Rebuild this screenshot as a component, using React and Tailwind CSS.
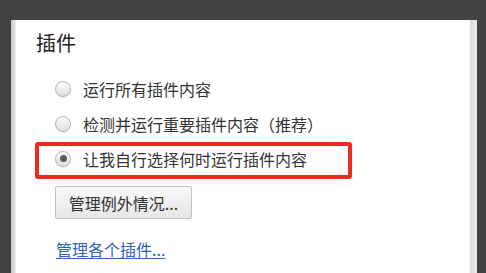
import React from "react";

const Radio = ({ checked }) => (
  <span className="flex h-4 w-4 items-center justify-center rounded-full border border-[#b4b4b4] bg-gradient-to-b from-[#fdfdfd] to-[#dedede] shadow-[0_1px_1px_rgba(0,0,0,0.08)]">
    {checked && <span className="h-[7px] w-[7px] rounded-full bg-[#5a5a5a]" />}
  </span>
);

const Option = ({ label, checked }) => (
  <div className="flex h-[35px] items-center">
    <Radio checked={checked} />
    <span className="ml-[12px] text-[16px] leading-[20px] text-[#333]">{label}</span>
  </div>
);

const App = () => {
  return (
    <div
      className="flex h-[273px] w-[486px] flex-col overflow-hidden bg-[#434343]"
      style={{ fontFamily: '"Noto Sans CJK SC", "Noto Sans", sans-serif' }}
    >
      <div className="h-[20px] shrink-0" />
      <div className="ml-[11px] mr-[9px] flex flex-1">
        <div className="w-[5px] bg-gradient-to-r from-[#c9c9c9] to-[#ececec]" />
        <div className="relative flex-1 bg-white">
          <h2 className="ml-[20px] mt-[9px] text-[20px] leading-[28px] text-[#222]">插件</h2>

          <div className="ml-[39px] mt-[14px]">
            <Option label="运行所有插件内容" />
            <Option label="检测并运行重要插件内容（推荐）" />
            <Option label="让我自行选择何时运行插件内容" checked />

            <button className="mt-[10px] flex h-[33px] w-[137px] items-center justify-center rounded-[2px] border border-[#c2c2c2] bg-gradient-to-b from-[#f9f9f9] to-[#e6e6e6] text-[16px] text-[#333]">
              管理例外情况...
            </button>

            <a
              href="#"
              className="ml-[1px] mt-[20px] block text-[16px] leading-[20px] text-[#2d62b8] underline underline-offset-2"
            >
              管理各个插件...
            </a>
          </div>

          <div className="absolute left-[19px] top-[122px] h-[37px] w-[317px] rounded-[3px] border-[4px] border-[#ec2a1e]" />
        </div>
        <div className="w-[7px] bg-gradient-to-r from-[#dcdcdc] to-[#e9e9e9]" />
      </div>
    </div>
  );
};

export default App;
